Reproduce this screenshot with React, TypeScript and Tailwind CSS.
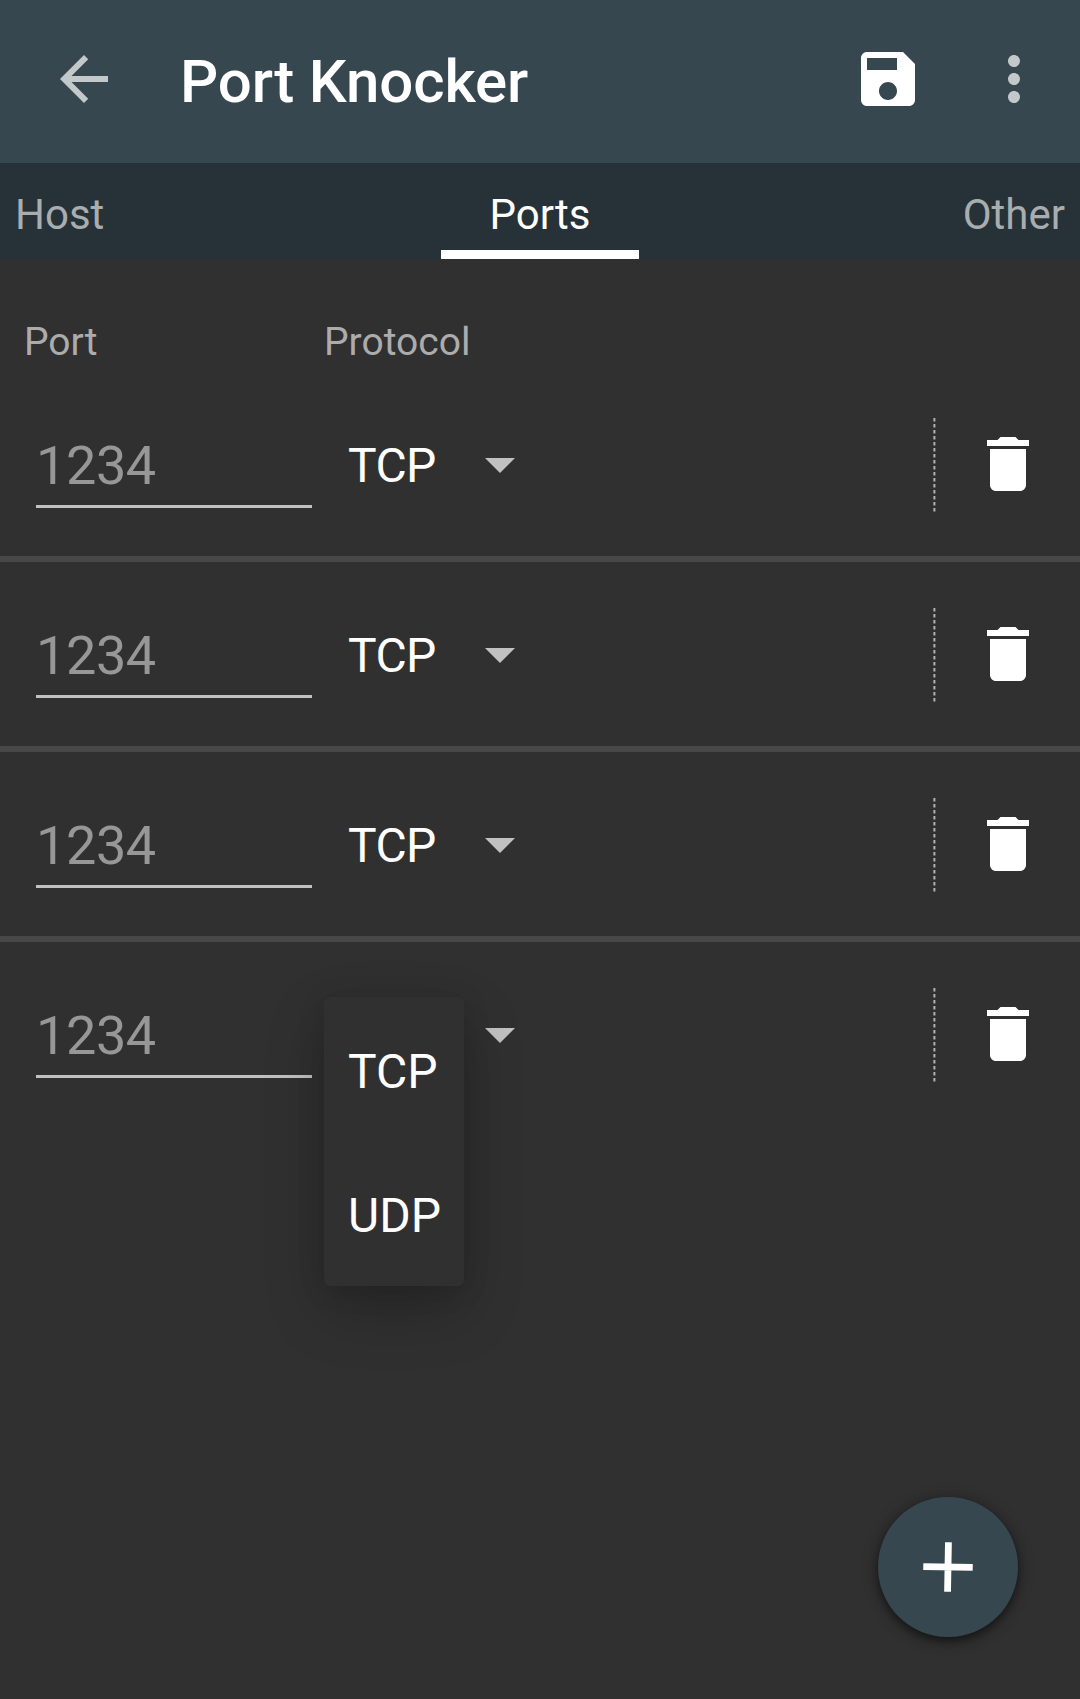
const ports = [1, 2, 3, 4];

function Icon({ d, className }: { d: string; className: string }) {
  return (
    <svg viewBox="0 0 24 24" className={`size-[72px] shrink-0 fill-current ${className}`} aria-hidden="true">
      <path d={d} />
    </svg>
  );
}

const arrowBack = 'M20 11H7.83l5.59-5.59L12 4l-8 8 8 8 1.41-1.41L7.83 13H20v-2z';
const save =
  'M17 3H5c-1.11 0-2 .9-2 2v14c0 1.1.89 2 2 2h14c1.1 0 2-.9 2-2V7l-4-4zm-5 16c-1.66 0-3-1.34-3-3s1.34-3 3-3 3 1.34 3 3-1.34 3-3 3zm3-10H5V5h10v4z';
const more =
  'M12 8c1.1 0 2-.9 2-2s-.9-2-2-2-2 .9-2 2 .9 2 2 2zm0 2c-1.1 0-2 .9-2 2s.9 2 2 2 2-.9 2-2-.9-2-2-2zm0 6c-1.1 0-2 .9-2 2s.9 2 2 2 2-.9 2-2-.9-2-2-2z';
const trash = 'M6 19c0 1.1.9 2 2 2h8c1.1 0 2-.9 2-2V7H6v12zM19 4h-3.5l-1-1h-5l-1 1H5v2h14V4z';

function ProtocolMenu() {
  return (
    <div className="absolute left-[324px] top-[55px] z-10 w-[140px] rounded-[6px] bg-[#303030] pt-[3px] text-[48px] leading-[144px] shadow-[0_24px_60px_rgba(0,0,0,0.22),0_4px_28px_rgba(0,0,0,0.12)]">
      <div className="h-[144px] pl-6">TCP</div>
      <div className="h-[142px] pl-6">UDP</div>
    </div>
  );
}

function PortRow({ last }: { last: boolean }) {
  return (
    <div className={`relative flex h-[190px] items-start ${last ? '' : 'border-b-[6px] border-[#484848]'}`}>
      <div className="ml-9 mt-[50px] h-[86px] w-[276px] border-b-[3px] border-[#c1c1c1] text-[54px] leading-[88px] tracking-[-0.4px] text-[#979797]">
        1234
      </div>
      <div className="ml-9 mt-[58px] w-[137px] text-[48px] leading-[72px] tracking-[-0.6px]">{last ? '' : 'TCP'}</div>
      <svg viewBox="0 0 30 15" className="mt-[86px] h-[15px] w-[30px] fill-[#c1c1c1]" aria-hidden="true">
        <path d="M0 0h30L15 15z" />
      </svg>
      <svg viewBox="0 0 3 96" className="ml-auto mt-[45px] h-24 w-[3px]" aria-hidden="true">
        <path d="M1.4 1V96" stroke="#b2b2b2" strokeWidth="2" strokeDasharray="3.4 2.6" />
      </svg>
      <Icon d={trash} className="ml-9 mr-9 mt-14" />
      {last && <ProtocolMenu />}
    </div>
  );
}

export default function App() {
  return (
    <div className="relative flex h-[1699px] w-[1080px] flex-col overflow-hidden bg-[#303030] font-['Roboto',sans-serif] text-white">
      <header className="flex h-[163px] shrink-0 items-start bg-[#37474f] pl-12 pr-[30px] pt-[43px]">
        <Icon d={arrowBack} className="text-[#c3c8ca]" />
        <h1 className="ml-[60px] mt-px text-[60px] font-medium leading-[76px] tracking-[-0.15px]">Port Knocker</h1>
        <Icon d={save} className="ml-auto" />
        <Icon d={more} className="ml-[54px] text-[#c3c8ca]" />
      </header>
      <nav className="grid h-24 shrink-0 grid-cols-[441px_198px_441px] bg-[#263238] text-[42px] leading-[104px] text-[#a8adaf]">
        <div className="pl-[15px]">Host</div>
        <div className="h-24 border-b-[9px] border-white text-center text-white">Ports</div>
        <div className="pr-[15px] text-right">Other</div>
      </nav>
      <div className="flex h-[113px] shrink-0 pl-6 pt-[58px] text-[39px] leading-[50px] text-[#acacac]">
        <div className="w-[300px]">Port</div>
        <div>Protocol</div>
      </div>
      <main>
        {ports.map((n) => (
          <PortRow key={n} last={n === ports.length} />
        ))}
      </main>
      <button
        aria-label="Add port"
        className="absolute left-[878px] top-[1497px] flex size-[140px] items-center justify-center rounded-full bg-[#37474f] shadow-[0_4px_10px_rgba(0,0,0,0.5),0_2px_18px_rgba(0,0,0,0.2)]"
      >
        <svg viewBox="0 0 50 50" className="size-[50px] rotate-1" aria-hidden="true">
          <path d="M25 .25v49.5M.25 25h49.5" stroke="white" strokeWidth="6.8" />
        </svg>
      </button>
    </div>
  );
}
